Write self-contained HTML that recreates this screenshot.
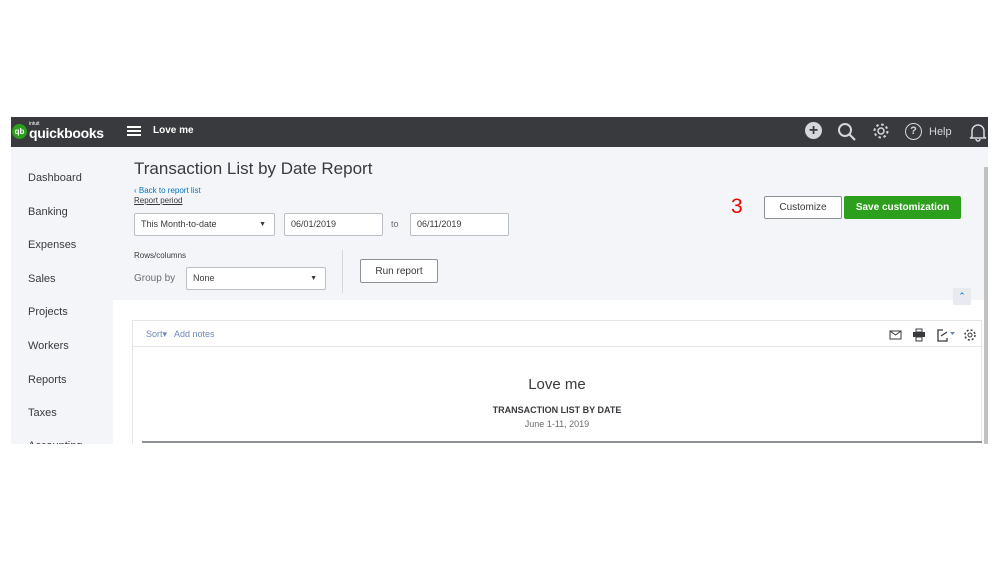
<!DOCTYPE html>
<html><head><style>
*{margin:0;padding:0;box-sizing:border-box}
body{width:999px;height:562px;background:#fff;position:relative;overflow:hidden;font-family:"Liberation Sans",sans-serif;color:#393a3d}
.a{position:absolute}
.shot{left:11px;top:117px;width:977px;height:327px;background:#f4f5f8;overflow:hidden}
.top{left:0;top:0;width:977px;height:30px;background:#393a3d}
.nav{font-size:11px;color:#393a3d}
.box{border:1px solid #babec5;background:#fff;font-size:9px;color:#393a3d;padding-left:6px;line-height:21px;border-radius:2px}
</style></head><body>
<div class="a shot">
 <div class="a top">
  <div class="a" style="left:1px;top:7px;width:15px;height:15px;border-radius:50%;background:#2ca01c;color:#fff;font-size:8px;font-weight:bold;text-align:center;line-height:15px">qb</div>
  <div class="a" style="left:18px;top:4px;color:#fff;font-size:5px">intuit</div>
  <div class="a" style="left:18px;top:8px;color:#fff;font-size:14px;font-weight:bold;letter-spacing:-0.3px">quickbooks</div>
  <div class="a" style="left:116px;top:9px;width:14px;height:2px;background:#fff;box-shadow:0 4px 0 #fff,0 8px 0 #fff"></div>
  <div class="a" style="left:142px;top:8px;color:#fff;font-size:10px;font-weight:bold">Love me</div>
  <div class="a" style="left:794px;top:5px;width:17px;height:17px;border-radius:50%;background:#d4d7dc;color:#393a3d;text-align:center;font-size:16px;line-height:17px;font-weight:bold">+</div>
  <svg class="a" style="left:826px;top:5px" width="20" height="20" viewBox="0 0 20 20"><circle cx="8" cy="8" r="6" fill="none" stroke="#d4d7dc" stroke-width="2"/><path d="M12.5 12.5L18 18" stroke="#d4d7dc" stroke-width="2.2"/></svg>
  <svg class="a" style="left:861px;top:5px" width="18" height="18" viewBox="0 0 18 18"><circle cx="9" cy="9" r="3" fill="none" stroke="#d4d7dc" stroke-width="1.5"/><circle cx="9" cy="9" r="6.5" fill="none" stroke="#d4d7dc" stroke-width="2" stroke-dasharray="2.5 2.6"/></svg>
  <div class="a" style="left:894px;top:6px;width:17px;height:17px;border-radius:50%;border:1.6px solid #d4d7dc;color:#d4d7dc;text-align:center;font-size:11px;line-height:14px;font-weight:bold">?</div>
  <div class="a" style="left:918px;top:9px;color:#d4d7dc;font-size:11px">Help</div>
  <svg class="a" style="left:958px;top:5px" width="18" height="20" viewBox="0 0 18 20"><path d="M3 15V9a6 6 0 0112 0v6l2 1H1z M7 17a2 2 0 004 0" fill="none" stroke="#d4d7dc" stroke-width="1.5"/></svg>
 </div>
 <div class="a nav" style="left:17px;top:55px">Dashboard</div>
 <div class="a nav" style="left:17px;top:89px">Banking</div>
 <div class="a nav" style="left:17px;top:122px">Expenses</div>
 <div class="a nav" style="left:17px;top:156px">Sales</div>
 <div class="a nav" style="left:17px;top:189px">Projects</div>
 <div class="a nav" style="left:17px;top:223px">Workers</div>
 <div class="a nav" style="left:17px;top:257px">Reports</div>
 <div class="a nav" style="left:17px;top:290px">Taxes</div>
 <div class="a nav" style="left:17px;top:323px">Accounting</div>
 <div class="a" style="left:123px;top:42px;font-size:17px;color:#393a3d">Transaction List by Date Report</div>
 <div class="a" style="left:123px;top:69px;font-size:8px;color:#0077c5">&#8249; Back to report list</div>
 <div class="a" style="left:123px;top:79px;font-size:8px;text-decoration:underline">Report period</div>
 <div class="a box" style="left:123px;top:96px;width:141px;height:23px">This Month-to-date<span style="position:absolute;right:8px;font-size:7px">&#9660;</span></div>
 <div class="a box" style="left:273px;top:96px;width:99px;height:23px">06/01/2019</div>
 <div class="a" style="left:380px;top:102px;font-size:9px;color:#6b6c72">to</div>
 <div class="a box" style="left:399px;top:96px;width:99px;height:23px">06/11/2019</div>
 <div class="a" style="left:123px;top:134px;font-size:8px">Rows/columns</div>
 <div class="a" style="left:123px;top:156px;font-size:10px;color:#6b6c72">Group by</div>
 <div class="a box" style="left:175px;top:150px;width:140px;height:23px">None<span style="position:absolute;right:8px;font-size:7px">&#9660;</span></div>
 <div class="a" style="left:331px;top:133px;width:1px;height:43px;background:#d4d7dc"></div>
 <div class="a" style="left:349px;top:142px;width:78px;height:24px;border:1px solid #8d9096;border-radius:2px;background:#fff;font-size:10px;text-align:center;line-height:23px">Run report</div>
 <div class="a" style="left:720px;top:78px;font-size:21px;color:#e00">3</div>
 <div class="a" style="left:753px;top:79px;width:78px;height:23px;border:1px solid #8d9096;border-radius:2px;background:#fff;font-size:10px;text-align:center;line-height:22px">Customize</div>
 <div class="a" style="left:833px;top:79px;width:117px;height:23px;border-radius:2px;background:#2ca01c;color:#fff;font-size:10px;font-weight:bold;text-align:center;line-height:23px">Save customization</div>
 <div class="a" style="left:973px;top:50px;width:4px;height:277px;background:#c1c1c1"></div>
 <div class="a" style="left:102px;top:183px;width:871px;height:144px;background:#fff"></div>
 <div class="a" style="left:942px;top:171px;width:18px;height:17px;background:#e8eaf0;color:#0077c5;font-size:9px;text-align:center;line-height:17px">&#8963;</div>
 <div class="a" style="left:121px;top:203px;width:850px;height:124px;border:1px solid #e3e5e8;border-bottom:none"></div>
 <div class="a" style="left:122px;top:229px;width:848px;height:1px;background:#e3e5e8"></div>
 <div class="a" style="left:135px;top:212px;font-size:9px;color:#6b87b8">Sort&#9662; &nbsp; Add notes</div>
 <svg class="a" style="left:878px;top:211px" width="90" height="14" viewBox="0 0 90 14"><rect x="1" y="3" width="11" height="8" fill="none" stroke="#393a3d"/><path d="M1 3l5.5 4 5.5-4" fill="none" stroke="#393a3d"/><rect x="27" y="1" width="6" height="3" fill="none" stroke="#393a3d"/><rect x="24" y="4" width="12" height="5" fill="#393a3d"/><rect x="27" y="9" width="6" height="4" fill="none" stroke="#393a3d"/><path d="M54 2h-5v11h9v-3 M52 8l6-4" fill="none" stroke="#393a3d" stroke-width="1.3"/><path d="M61 4h5l-2.5 3z" fill="#6b87b8"/><circle cx="81" cy="7" r="2" fill="none" stroke="#393a3d"/><circle cx="81" cy="7" r="5" fill="none" stroke="#393a3d" stroke-width="1.5" stroke-dasharray="2 2"/></svg>
 <div class="a" style="left:121px;top:259px;width:850px;text-align:center;font-size:15px;color:#393a3d">Love me</div>
 <div class="a" style="left:121px;top:288px;width:850px;text-align:center;font-size:9px;font-weight:bold">TRANSACTION LIST BY DATE</div>
 <div class="a" style="left:121px;top:302px;width:850px;text-align:center;font-size:9px;color:#6b6c72">June 1-11, 2019</div>
 <div class="a" style="left:131px;top:324px;width:840px;height:2px;background:#8d9096"></div>
</div>
</body></html>
